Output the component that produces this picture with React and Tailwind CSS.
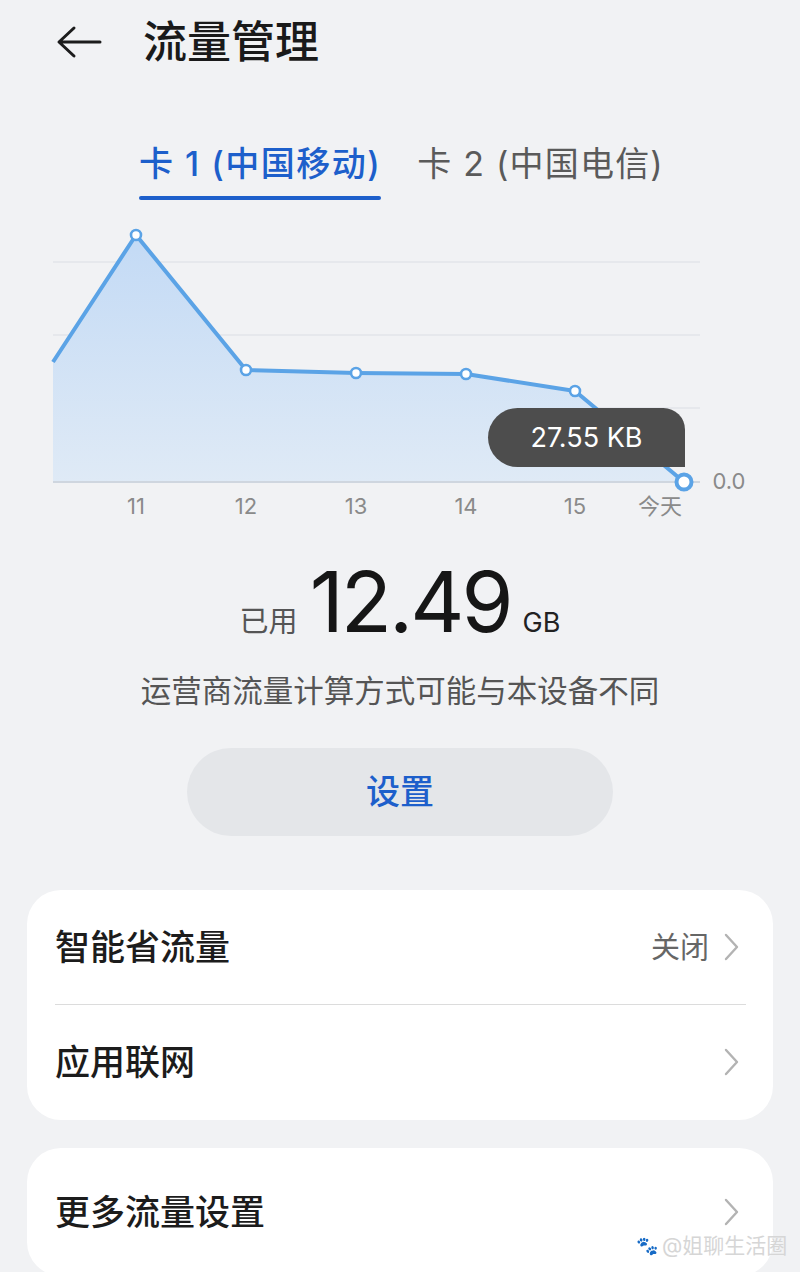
import React from "react";

const pts = [
    [136, 235],
    [246, 370],
    [356, 373],
    [466, 374],
    [575, 391],
];

function Chevron() {
    return (
        <svg width="16" height="30" viewBox="0 0 16 30" fill="none">
            <path d="M3 3 L14 15 L3 27" stroke="#b3b3b3" strokeWidth="2.4" strokeLinecap="round" strokeLinejoin="round" />
        </svg>
    );
}

function Row({ label, value, divider }) {
    return (
        <div className="relative flex items-center h-[115px] pl-[28px] pr-[34px]">
            <span className="text-[35px] font-medium text-[#1c1c1c] flex-1">{label}</span>
            {value && <span className="text-[29px] text-[#666] mr-[14px]">{value}</span>}
            <Chevron />
            {divider && <div className="absolute bottom-0 left-[28px] right-[27px] h-px bg-[#dcdcdc]"></div>}
        </div>
    );
}

export default function App() {
    const line = "M53 362 " + pts.map((p) => `L${p[0]} ${p[1]}`).join(" ") + " L684 482";
    const area = line + " L53 482 Z";

    return (
        <div
            className="w-[800px] h-[1272px] overflow-hidden bg-[#f1f2f4] relative"
            style={{ fontFamily: 'Inter, "Noto Sans CJK SC", "Noto Sans", sans-serif' }}
        >
            {/* header */}
            <div className="flex items-center h-[84px] pl-[56px]">
                <svg width="46" height="34" viewBox="0 0 46 34" fill="none">
                    <path d="M44 17 H4 M18 3 L3 17 L18 31" stroke="#1c1c1c" strokeWidth="3" strokeLinecap="round" strokeLinejoin="round" />
                </svg>
                <h1 className="ml-[41px] text-[44px] font-medium text-[#1a1a1a] leading-none">流量管理</h1>
            </div>

            {/* tabs */}
            <div className="flex pl-[139px] gap-[36px] mt-[58px]">
                <div className="flex flex-col items-stretch">
                    <span className="text-[34px] font-medium text-[#1d5fcb] leading-[44px] tracking-[1.5px]">卡 1 (中国移动)</span>
                    <div className="h-[4px] rounded-full bg-[#1d5fcb] mt-[10px]"></div>
                </div>
                <span className="text-[34px] text-[#5a5a5a] leading-[44px] tracking-[1.2px]">卡 2 (中国电信)</span>
            </div>

            {/* chart */}
            <div className="relative h-[318px] mt-[8px]">
                <svg width="800" height="318" viewBox="0 208 800 318">
                    <defs>
                        <linearGradient id="fill" x1="0" y1="0" x2="0" y2="1">
                            <stop offset="0%" stopColor="#c3daf5" />
                            <stop offset="100%" stopColor="#dfeaf6" />
                        </linearGradient>
                    </defs>
                    {[262, 335, 408].map((y) => (
                        <line key={y} x1="53" x2="700" y1={y} y2={y} stroke="#e2e5ea" strokeWidth="1.5" />
                    ))}
                    <path d={area} fill="url(#fill)" />
                    <line x1="53" x2="700" y1="482" y2="482" stroke="#cfd6df" strokeWidth="2" />
                    <path d={line} fill="none" stroke="#5ba3e6" strokeWidth="4" strokeLinejoin="round" />
                    {pts.map((p) => (
                        <circle key={p[0]} cx={p[0]} cy={p[1]} r="5" fill="#fff" stroke="#5ba3e6" strokeWidth="2.6" />
                    ))}
                    <circle cx="684" cy="482" r="7.5" fill="#fff" stroke="#5ba3e6" strokeWidth="4" />
                    <g fill="#8a8a8a" fontSize="22" textAnchor="middle" fontFamily='Inter, "Noto Sans CJK SC", sans-serif'>
                        <text x="136" y="514">11</text>
                        <text x="246" y="514">12</text>
                        <text x="356" y="514">13</text>
                        <text x="466" y="514">14</text>
                        <text x="575" y="514">15</text>
                        <text x="660" y="514">今天</text>
                        <text x="729" y="489">0.0</text>
                    </g>
                </svg>
                <div className="absolute left-[488px] top-[200px] w-[197px] h-[59px] bg-[#4d4d4d] rounded-l-[30px] rounded-tr-[22px] flex items-center justify-center">
                    <span className="text-white text-[27px] leading-none">27.55 KB</span>
                </div>
            </div>

            {/* usage */}
            <div className="flex items-baseline justify-center mt-[34px] h-[90px]">
                <span className="text-[29px] text-[#555]">已用</span>
                <span className="text-[84px] text-[#161616] leading-none mx-[12px] tracking-[-3px]">12.49</span>
                <span className="text-[27px] text-[#222]">GB</span>
            </div>
            <p className="text-center text-[30.5px] text-[#555] mt-[18px]">运营商流量计算方式可能与本设备不同</p>

            <div className="flex justify-center mt-[34px]">
                <button className="w-[426px] h-[88px] rounded-full bg-[#e4e6e9] text-[34px] font-medium text-[#1d5fcb]">设置</button>
            </div>

            {/* lists */}
            <div className="mx-[27px] mt-[54px] bg-white rounded-[34px]">
                <Row label="智能省流量" value="关闭" divider />
                <Row label="应用联网" />
            </div>
            <div className="mx-[27px] mt-[28px] bg-white rounded-[34px]">
                <div className="flex items-center h-[128px] pl-[28px] pr-[34px]">
                    <span className="text-[35px] font-medium text-[#1c1c1c] flex-1">更多流量设置</span>
                    <Chevron />
                </div>
            </div>

            {/* watermark */}
            <div className="absolute left-[636px] top-[1230px] flex items-center gap-[4px] text-[21px] text-[#d6d6d6]">
                <span className="text-[18px]">🐾</span>
                <span>@姐聊生活圈</span>
            </div>
        </div>
    );
}
